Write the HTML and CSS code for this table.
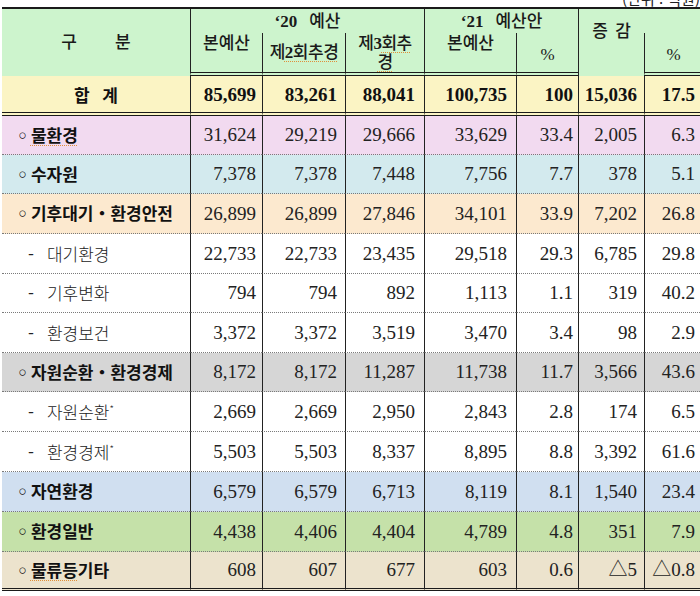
FILE: index.html
```html
<!DOCTYPE html>
<html lang="ko">
<head>
<meta charset="utf-8">
<title>환경부 예산</title>
<link rel="stylesheet" href="styles.css">
</head>
<body>
<div class="unit"><span>(단위 : 억원)</span></div>
<table class="budget">
  <colgroup>
    <col class="c0"><col class="c1"><col class="c2"><col class="c3"><col class="c4"><col class="c5"><col class="c6"><col class="c7">
  </colgroup>
  <thead>
    <tr class="h1">
      <th rowspan="2" class="gubun">구 분</th>
      <th colspan="3" class="vl grp"><span class="num">‘20</span><span class="kw">예산</span></th>
      <th colspan="2" class="vl grp"><span class="num">‘21</span><span class="kw">예산안</span></th>
      <th rowspan="2" class="vl jg">증 감</th>
      <th class="blank"></th>
    </tr>
    <tr class="h2">
      <th class="vl top">본예산</th>
      <th class="vl cond">제<span class="sp"><span class="num">2</span>회추경</span></th>
      <th class="vl top cond">제<span class="num">3</span><span class="sp">회추</span><br><span class="sp">경</span></th>
      <th class="vl top">본예산</th>
      <th class="vl pct">%</th>
      <th class="vl pct">%</th>
    </tr>
  </thead>
  <tbody>
    <tr class="total">
      <td class="ttl">합 계</td>
      <td>85,699</td><td>83,261</td><td>88,041</td><td>100,735</td><td>100</td><td>15,036</td><td>17.5</td>
    </tr>
    <tr class="r39 pink">
      <td class="lbl"><span class="dot">◦</span><span class="sp">물환경</span></td>
      <td>31,624</td><td>29,219</td><td>29,666</td><td>33,629</td><td>33.4</td><td>2,005</td><td>6.3</td>
    </tr>
    <tr class="r39 cyan">
      <td class="lbl"><span class="dot">◦</span>수자원</td>
      <td>7,378</td><td>7,378</td><td>7,448</td><td>7,756</td><td>7.7</td><td>378</td><td>5.1</td>
    </tr>
    <tr class="r40 peach">
      <td class="lbl"><span class="dot">◦</span>기후대기・환경안전</td>
      <td>26,899</td><td>26,899</td><td>27,846</td><td>34,101</td><td>33.9</td><td>7,202</td><td>26.8</td>
    </tr>
    <tr class="r40">
      <td class="sub"><span class="dash">-</span>대기환경</td>
      <td>22,733</td><td>22,733</td><td>23,435</td><td>29,518</td><td>29.3</td><td>6,785</td><td>29.8</td>
    </tr>
    <tr class="r39">
      <td class="sub"><span class="dash">-</span>기후변화</td>
      <td>794</td><td>794</td><td>892</td><td>1,113</td><td>1.1</td><td>319</td><td>40.2</td>
    </tr>
    <tr class="r40">
      <td class="sub"><span class="dash">-</span>환경보건</td>
      <td>3,372</td><td>3,372</td><td>3,519</td><td>3,470</td><td>3.4</td><td>98</td><td>2.9</td>
    </tr>
    <tr class="r39 gray">
      <td class="lbl"><span class="dot">◦</span>자원순환・환경경제</td>
      <td>8,172</td><td>8,172</td><td>11,287</td><td>11,738</td><td>11.7</td><td>3,566</td><td>43.6</td>
    </tr>
    <tr class="r40">
      <td class="sub"><span class="dash">-</span>자원순환<sup>*</sup></td>
      <td>2,669</td><td>2,669</td><td>2,950</td><td>2,843</td><td>2.8</td><td>174</td><td>6.5</td>
    </tr>
    <tr class="r40">
      <td class="sub"><span class="dash">-</span>환경경제<sup>*</sup></td>
      <td>5,503</td><td>5,503</td><td>8,337</td><td>8,895</td><td>8.8</td><td>3,392</td><td>61.6</td>
    </tr>
    <tr class="r40 blue">
      <td class="lbl"><span class="dot">◦</span>자연환경</td>
      <td>6,579</td><td>6,579</td><td>6,713</td><td>8,119</td><td>8.1</td><td>1,540</td><td>23.4</td>
    </tr>
    <tr class="r40 green">
      <td class="lbl"><span class="dot">◦</span>환경일반</td>
      <td>4,438</td><td>4,406</td><td>4,404</td><td>4,789</td><td>4.8</td><td>351</td><td>7.9</td>
    </tr>
    <tr class="r39 tan last">
      <td class="lbl"><span class="dot">◦</span><span class="sp">물류등</span>기타</td>
      <td>608</td><td>607</td><td>677</td><td>603</td><td>0.6</td><td>△5</td><td>△0.8</td>
    </tr>
  </tbody>
</table>
</body>
</html>
```
FILE: styles.css
```css
html, body {
  margin: 0;
  padding: 0;
  overflow: hidden;
  background: #ffffff;
}
body {
  width: 700px;
  height: 596px;
  font-family: "Liberation Serif", "Noto Sans CJK KR", serif;
  color: #161616;
}
.unit {
  height: 7px;
  display: flex;
  justify-content: flex-end;
  align-items: flex-end;
  padding-right: 0;
}
.unit span {
  font-family: "Noto Sans CJK KR", sans-serif;
  font-size: 15px;
  line-height: 17px;
  white-space: nowrap;
  color: #222;
}
.budget {
  margin-left: 2px;
  width: 700px;
  table-layout: fixed;
  border-collapse: separate;
  border-spacing: 0;
  border-top: 2px solid #1a1a1a;
}
.c0 { width: 188px; }
.c1 { width: 72px; }
.c2 { width: 83px; }
.c3 { width: 79px; }
.c4 { width: 92px; }
.c5 { width: 62px; }
.c6 { width: 66px; }
.c7 { width: 58px; }

.budget th, .budget td {
  padding: 0;
  border: 0;
  box-sizing: border-box;
  white-space: nowrap;
  overflow: hidden;
}
.budget td + td { border-left: 1px solid #222; }
.budget th.vl { border-left: 1px solid #222; }

/* header */
thead tr { background: #cdf4cd; }
.h1 { height: 24px; }
.h2 { height: 43px; }
.budget th {
  font-family: "Liberation Serif", "Noto Sans CJK KR", serif;
  font-weight: 500;
  font-size: 17px;
  line-height: 19px;
  text-align: center;
  vertical-align: middle;
  color: #1a1a1a;
}
.budget th .num { font-weight: 700; font-family: "Liberation Serif", serif; }
.budget th .kw { margin-left: 12px; }
.grp, .blank { border-bottom: 1px solid #222; }
.gubun {
  word-spacing: 34px;
  border-bottom: 4px double #1a1a1a;
}
.jg {
  vertical-align: top !important;
  padding-top: 13px !important;
  word-spacing: 3px;
  border-bottom: 4px double #1a1a1a;
}
.h2 th { border-bottom: 4px double #1a1a1a; }
.h2 th.top { vertical-align: top; padding-top: 1px; }
.h2 th.cond { letter-spacing: -0.5px; }
.h2 th.pct {
  font-family: "Liberation Serif", serif;
  font-weight: 400;
  font-size: 17px;
  padding-top: 4px;
}
.sp {
  text-decoration: underline dotted #e0903a;
  text-underline-offset: 3px;
  text-decoration-thickness: 1px;
}

/* body */
.budget td {
  font-size: 19px;
  line-height: 22px;
  text-align: right;
  vertical-align: middle;
  border-bottom: 1px dotted #7a7a7a;
  color: #222;
}
.budget td:nth-child(2) { padding-right: 6px; }
.budget td:nth-child(3) { padding-right: 8px; }
.budget td:nth-child(4) { padding-right: 9px; }
.budget td:nth-child(5) { padding-right: 9px; }
.budget td:nth-child(6) { padding-right: 5px; }
.budget td:nth-child(7) { padding-right: 7px; }
.budget td:nth-child(8) { padding-right: 7px; }

.total { height: 40px; background: #fbf4c4; }
.total td {
  font-weight: 700;
  color: #111;
  border-bottom: 4px double #1a1a1a;
  padding-top: 1px;
}
.budget td.ttl {
  text-align: center;
  font-family: "Noto Sans CJK KR", sans-serif;
  font-size: 17px;
  word-spacing: 8px;
}
.r39 { height: 39px; }
.r40 { height: 40px; }
.pink { background: #f2daf0; }
.cyan { background: #d3eaee; }
.peach { background: #fce9cf; }
.gray { background: #d6d6d6; }
.blue { background: #d0dff0; }
.green { background: #c5e1a9; }
.tan { background: #ece3cd; }
.last td { border-bottom: 3px double #1a1a1a; }

.budget td.lbl, .budget td.sub {
  text-align: left;
  font-family: "Noto Sans CJK KR", sans-serif;
  font-size: 17px;
  color: #111;
}
.budget td.lbl { font-weight: 700; padding-left: 15px; }
.dot {
  font-family: "DejaVu Sans", sans-serif;
  font-weight: 700;
  font-size: 17px;
  margin-right: 3px;
}
.budget td.sub { font-weight: 300; padding-left: 26px; color: #222; }
.dash { margin-right: 13px; font-weight: 400; }
.budget td sup {
  font-size: 10px;
  line-height: 0;
  vertical-align: 6px;
}
```
